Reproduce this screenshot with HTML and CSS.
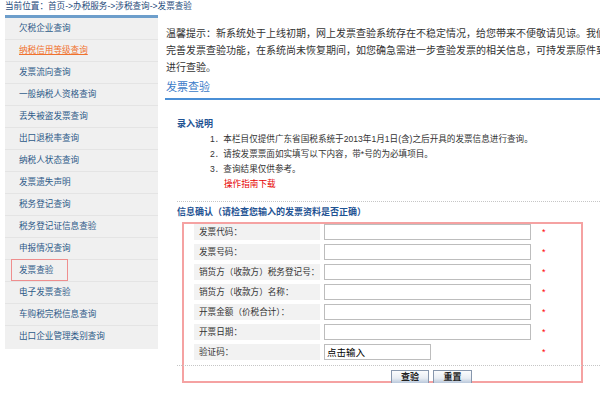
FILE: index.html
```html
<!DOCTYPE html>
<html lang="zh-CN">
<head>
<meta charset="utf-8">
<title>发票查验</title>
<link rel="stylesheet" href="styles.css">
</head>
<body>
<div class="crumb">当前位置：首页-&gt;办税服务-&gt;涉税查询-&gt;发票查验</div>
<div class="layout">
  <ul class="side">
    <li>欠税企业查询</li>
    <li class="on">纳税信用等级查询</li>
    <li>发票流向查询</li>
    <li>一般纳税人资格查询</li>
    <li>丢失被盗发票查询</li>
    <li>出口退税率查询</li>
    <li>纳税人状态查询</li>
    <li>发票遗失声明</li>
    <li>税务登记查询</li>
    <li>税务登记证信息查验</li>
    <li>申报情况查询</li>
    <li class="sel"><span class="mark">发票查验</span></li>
    <li>电子发票查验</li>
    <li>车购税完税信息查询</li>
    <li>出口企业管理类别查询</li>
  </ul>
  <div class="main">
    <div class="notice">
      <p>温馨提示：新系统处于上线初期，网上发票查验系统存在不稳定情况，给您带来不便敬请见谅。我们</p>
      <p>完善发票查验功能，在系统尚未恢复期间，如您确急需进一步查验发票的相关信息，可持发票原件到</p>
      <p>进行查验。</p>
    </div>
    <h2 class="title">发票查验</h2>
    <div class="section">
      <h3 class="head">录入说明</h3>
      <ol class="rules">
        <li>1．本栏目仅提供广东省国税系统于2013年1月1日(含)之后开具的发票信息进行查询。</li>
        <li>2．请按发票票面如实填写以下内容，带*号的为必填项目。</li>
        <li>3．查询结果仅供参考。</li>
        <li class="dl">操作指南下载</li>
      </ol>
      <div class="dots"></div>
      <h3 class="head">信息确认（请检查您输入的发票资料是否正确）</h3>
      <div class="box">
        <div class="row"><span class="lb">发票代码：</span><input class="ipt" type="text"><span class="star">*</span></div>
        <div class="row"><span class="lb">发票号码：</span><input class="ipt" type="text"><span class="star">*</span></div>
        <div class="row"><span class="lb">销货方（收款方）税务登记号：</span><input class="ipt" type="text"><span class="star">*</span></div>
        <div class="row"><span class="lb">销货方（收款方）名称：</span><input class="ipt" type="text"><span class="star">*</span></div>
        <div class="row"><span class="lb">开票金额（价税合计）：</span><input class="ipt" type="text"><span class="star">*</span></div>
        <div class="row"><span class="lb">开票日期：</span><input class="ipt" type="text"><span class="star">*</span></div>
        <div class="row"><span class="lb">验证码：</span><input class="ipt code" type="text" value="点击输入"><span class="star far">*</span></div>
        <div class="dots wide"></div>
        <div class="btns"><button class="btn" type="button">查验</button><button class="btn" type="button">重置</button></div>
      </div>
    </div>
  </div>
</div>
</body>
</html>
```
FILE: styles.css
```css
html, body {
  margin: 0;
  padding: 0;
}
body {
  width: 600px;
  height: 402px;
  overflow: hidden;
  background: #fff;
  font-family: "Liberation Sans", "Noto Sans CJK SC", sans-serif;
  font-size: 8.6px;
  color: #333;
}
.crumb {
  height: 15px;
  line-height: 12px;
  padding-left: 5px;
  color: #1d4a7a;
  white-space: nowrap;
}
.layout {
  display: flex;
  align-items: flex-start;
}
.side {
  list-style: none;
  margin: 0 0 0 5px;
  padding: 0 0 2px 0;
  width: 153px;
  flex: none;
  background: #f0f0f0;
  border-top: 3px solid #6d9ecb;
}
.side li {
  height: 21px;
  line-height: 21px;
  border-bottom: 1px solid #e4e4e4;
  padding-left: 14px;
  color: #2d5a88;
  white-space: nowrap;
}
.side li:last-child {
  border-bottom: none;
}
.side .on {
  color: #f0722e;
  text-decoration: underline;
}
.side .sel {
  padding-left: 6px;
}
.side .mark {
  display: inline-block;
  vertical-align: top;
  margin-top: -1px;
  height: 20px;
  line-height: 20px;
  padding: 0 14px 0 7px;
  border: 1px solid #ef8e8e;
}
.main {
  flex: 1;
  min-width: 0;
  margin-left: 7px;
  overflow: hidden;
  padding-top: 10px;
}
.notice p {
  margin: 0;
  padding-left: 1px;
  font-size: 10px;
  line-height: 17px;
  white-space: nowrap;
  color: #333;
}
.title {
  margin: 0;
  padding: 2px 0 2px 1px;
  font-size: 11px;
  font-weight: normal;
  line-height: 18px;
  color: #3b7bc8;
  border-bottom: 2px solid #4a8fd6;
}
.section {
  padding: 17px 0 0 12px;
}
.head {
  margin: 0;
  font-size: 9px;
  font-weight: bold;
  line-height: 15px;
  color: #1f5393;
  white-space: nowrap;
}
.rules {
  list-style: none;
  margin: 0;
  padding: 0 0 0 33px;
}
.rules li {
  line-height: 15px;
  white-space: nowrap;
}
.rules .dl {
  color: #e60000;
  padding-left: 14px;
}
.dots {
  border-top: 1px dotted #c6c6c6;
  margin: 9px 0 3px;
}
.box {
  margin: 2px 0 0 5px;
  width: 387px;
  padding-left: 10px;
  border: 2px solid #f5a2a2;
}
.row {
  display: flex;
  align-items: center;
  height: 16px;
  margin-bottom: 4px;
}
.lb {
  width: 121px;
  height: 16px;
  line-height: 16px;
  padding-left: 5px;
  background: #f2f2f2;
  color: #333;
  white-space: nowrap;
}
.ipt {
  margin: 0 0 0 4px;
  width: 207px;
  height: 16px;
  box-sizing: border-box;
  border: 1px solid #bdbdbd;
  padding: 0 2px;
  background: #fff;
  font-family: "Liberation Sans", "Noto Sans CJK SC", sans-serif;
  font-size: 9.5px;
  color: #000;
  outline: none;
}
.ipt.code {
  width: 107px;
}
.star {
  margin-left: 11px;
  color: #f00;
  font-size: 9px;
  line-height: 16px;
}
.star.far {
  margin-left: 111px;
}
.dots.wide {
  margin: 5px -19px 0 -17px;
}
.btns {
  display: flex;
  gap: 4px;
  height: 11px;
  margin-top: 4px;
  padding-left: 197px;
}
.btn {
  flex: none;
  width: 38px;
  height: 15px;
  padding: 0;
  border: 1px solid #8797ad;
  background: linear-gradient(#fbfcfd, #e8edf3 55%, #afc0d6);
  font-family: "Liberation Sans", "Noto Sans CJK SC", sans-serif;
  font-size: 9px;
  font-weight: bold;
  line-height: 13px;
  color: #222;
}
.btn + .btn {
  width: 39px;
}
```
